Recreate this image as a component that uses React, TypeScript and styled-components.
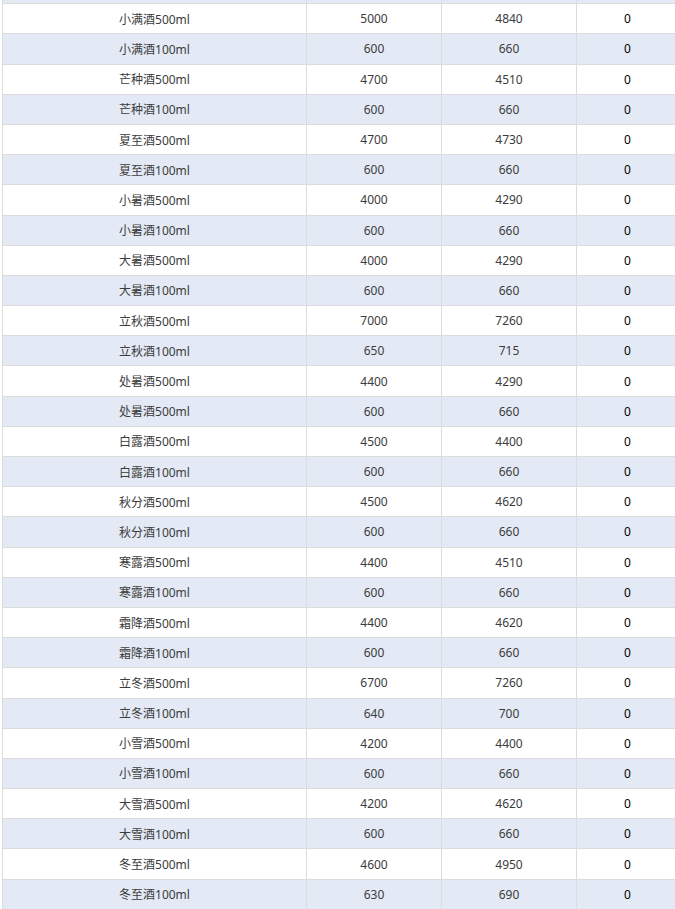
import styled, { createGlobalStyle } from 'styled-components';

const GlobalStyle = createGlobalStyle`
  html, body {
    margin: 0;
    padding: 0;
    background: #fff;
  }
`;

const Viewport = styled.div`
  height: 100vh;
  overflow: hidden;
  padding-left: 2px;
`;

const Table = styled.table`
  border-collapse: collapse;
  table-layout: fixed;
  width: 676px;
  font-family: 'Noto Sans', 'Noto Sans CJK SC', sans-serif;
  font-size: 12px;
`;

const Col = styled.col<{ $w: number }>`
  width: ${(p) => p.$w}px;
`;

const Row = styled.tr`
  &:nth-child(odd) {
    background: #e4eaf5;
  }
`;

const Cell = styled.td<{ $strong?: boolean }>`
  height: 29.2px;
  padding: 0;
  border: 1px solid #dcdcdc;
  text-align: center;
  vertical-align: middle;
  color: ${(p) => (p.$strong ? '#000' : '#3c3c3c')};
`;

// tail of the row scrolled out above the visible area
const StubCell = styled.td`
  height: 3.2px;
  padding: 0;
  border: 1px solid #dcdcdc;
  border-top: 0;
`;

type Item = [string, number, number, number];

const items: Item[] = [
  ['小满酒500ml', 5000, 4840, 0],
  ['小满酒100ml', 600, 660, 0],
  ['芒种酒500ml', 4700, 4510, 0],
  ['芒种酒100ml', 600, 660, 0],
  ['夏至酒500ml', 4700, 4730, 0],
  ['夏至酒100ml', 600, 660, 0],
  ['小暑酒500ml', 4000, 4290, 0],
  ['小暑酒100ml', 600, 660, 0],
  ['大暑酒500ml', 4000, 4290, 0],
  ['大暑酒100ml', 600, 660, 0],
  ['立秋酒500ml', 7000, 7260, 0],
  ['立秋酒100ml', 650, 715, 0],
  ['处暑酒500ml', 4400, 4290, 0],
  ['处暑酒500ml', 600, 660, 0],
  ['白露酒500ml', 4500, 4400, 0],
  ['白露酒100ml', 600, 660, 0],
  ['秋分酒500ml', 4500, 4620, 0],
  ['秋分酒100ml', 600, 660, 0],
  ['寒露酒500ml', 4400, 4510, 0],
  ['寒露酒100ml', 600, 660, 0],
  ['霜降酒500ml', 4400, 4620, 0],
  ['霜降酒100ml', 600, 660, 0],
  ['立冬酒500ml', 6700, 7260, 0],
  ['立冬酒100ml', 640, 700, 0],
  ['小雪酒500ml', 4200, 4400, 0],
  ['小雪酒100ml', 600, 660, 0],
  ['大雪酒500ml', 4200, 4620, 0],
  ['大雪酒100ml', 600, 660, 0],
  ['冬至酒500ml', 4600, 4950, 0],
  ['冬至酒100ml', 630, 690, 0],
];

const App = () => (
  <>
    <GlobalStyle />
    <Viewport>
      <Table>
        <colgroup>
          <Col $w={304} />
          <Col $w={135} />
          <Col $w={135} />
          <Col $w={102} />
        </colgroup>
        <tbody>
          <Row>
            <StubCell />
            <StubCell />
            <StubCell />
            <StubCell />
          </Row>
          {items.map(([name, stock, price, sold], i) => (
            <Row key={i}>
              <Cell>{name}</Cell>
              <Cell>{stock}</Cell>
              <Cell>{price}</Cell>
              <Cell $strong>{sold}</Cell>
            </Row>
          ))}
        </tbody>
      </Table>
    </Viewport>
  </>
);

export default App;
